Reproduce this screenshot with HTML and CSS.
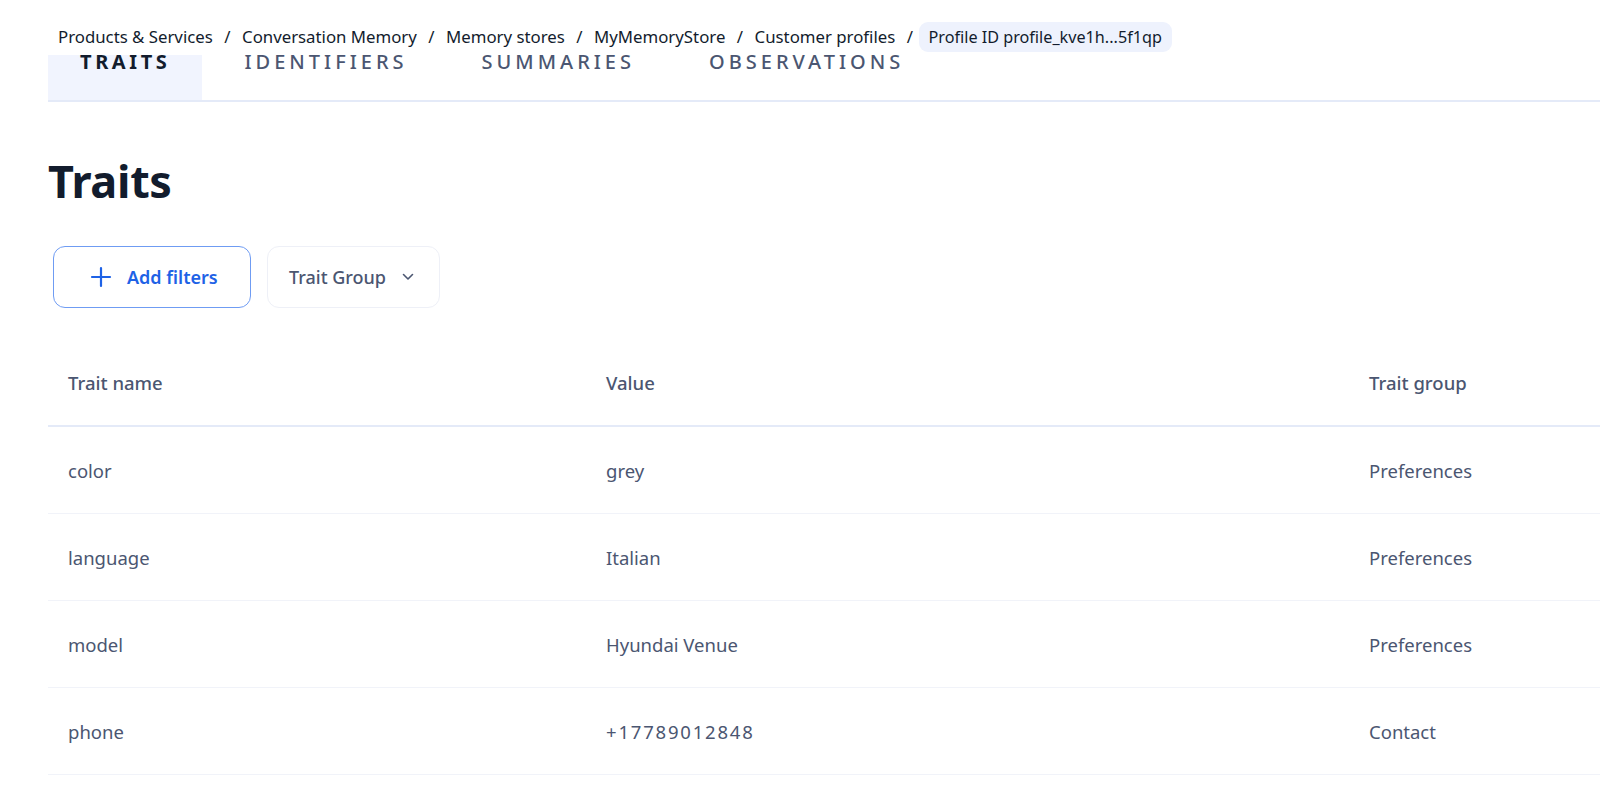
FILE: index.html
```html
<!DOCTYPE html>
<html lang="en">
<head>
<meta charset="utf-8">
<title>Traits</title>
<link rel="stylesheet" href="styles.css">
</head>
<body>
<div class="page">
  <nav class="crumbs">
    <span class="crumb">Products &amp; Services</span>
    <span class="sep">/</span>
    <span class="crumb">Conversation Memory</span>
    <span class="sep">/</span>
    <span class="crumb">Memory stores</span>
    <span class="sep">/</span>
    <span class="crumb">MyMemoryStore</span>
    <span class="sep">/</span>
    <span class="crumb">Customer profiles</span>
    <span class="sep">/</span>
    <span class="crumb current">Profile ID profile_kve1h...5f1qp</span>
  </nav>

  <div class="tabs">
    <div class="tab active"><span>TRAITS</span></div>
    <div class="tab"><span>IDENTIFIERS</span></div>
    <div class="tab"><span>SUMMARIES</span></div>
    <div class="tab"><span>OBSERVATIONS</span></div>
  </div>

  <h1 class="title">Traits</h1>

  <div class="filters">
    <button class="btn btn-add">
      <svg class="plus" width="22" height="22" viewBox="0 0 22 22" aria-hidden="true">
        <path d="M11 2v18M2 11h18" stroke="currentColor" stroke-width="2.2" stroke-linecap="round" fill="none"/>
      </svg>
      <span>Add filters</span>
    </button>
    <button class="btn btn-group">
      <span>Trait Group</span>
      <svg class="chev" width="12" height="8" viewBox="0 0 12 8" aria-hidden="true">
        <path d="M1.5 1.5L6 6l4.5-4.5" stroke="currentColor" stroke-width="1.6" stroke-linecap="round" stroke-linejoin="round" fill="none"/>
      </svg>
    </button>
  </div>

  <div class="table">
    <div class="row head">
      <div class="cell c1">Trait name</div>
      <div class="cell c2">Value</div>
      <div class="cell c3">Trait group</div>
    </div>
    <div class="row">
      <div class="cell c1">color</div>
      <div class="cell c2">grey</div>
      <div class="cell c3">Preferences</div>
    </div>
    <div class="row">
      <div class="cell c1">language</div>
      <div class="cell c2">Italian</div>
      <div class="cell c3">Preferences</div>
    </div>
    <div class="row">
      <div class="cell c1">model</div>
      <div class="cell c2">Hyundai Venue</div>
      <div class="cell c3">Preferences</div>
    </div>
    <div class="row">
      <div class="cell c1">phone</div>
      <div class="cell c2 num">+17789012848</div>
      <div class="cell c3">Contact</div>
    </div>
  </div>
</div>
</body>
</html>
```

FILE: styles.css
```css
* { box-sizing: border-box; }

html, body {
  margin: 0;
  padding: 0;
  background: #ffffff;
  font-family: "Noto Sans", "Open Sans", sans-serif;
  color: #121c2d;
  overflow: hidden;
}

.page {
  padding-left: 48px;
  width: 1600px;
}

/* Breadcrumbs */
.crumbs {
  display: flex;
  align-items: center;
  height: 55px;
  padding: 19px 0 0 10px;
  gap: 11.5px;
  font-size: 16.8px;
  line-height: 20px;
  color: #121c2d;
  white-space: nowrap;
}

.sep {
  color: #121c2d;
}

.crumb.current {
  background: #eef2fd;
  border-radius: 9px;
  padding: 5px 10px;
  margin-left: -6px;
  font-size: 16.2px;
}

/* Tabs */
.tabs {
  display: flex;
  gap: 10px;
  height: 47px;
  border-bottom: 2px solid #e4eaf8;
}

.tab {
  padding: 0 32px;
  height: 45px;
  font-size: 20px;
  line-height: 14px;
  letter-spacing: 4px;
  color: #4b5671;
  font-weight: 500;
}

.tab span {
  display: block;
}

.tab.active {
  background: #f1f4fe;
  color: #121c2d;
  font-weight: 700;
  letter-spacing: 3.6px;
}

/* Title */
.title {
  margin: 0;
  padding-top: 51px;
  font-size: 45px;
  line-height: 56px;
  font-weight: 700;
  color: #121c2d;
  letter-spacing: -0.3px;
}

/* Filters */
.filters {
  display: flex;
  gap: 16px;
  margin-top: 37px;
  padding-left: 5px;
}

.btn {
  display: flex;
  align-items: center;
  height: 62px;
  border-radius: 12px;
  background: #ffffff;
  font-family: inherit;
  font-size: 18px;
  cursor: pointer;
}

.btn-add {
  width: 198px;
  padding: 0 0 0 36px;
  gap: 15px;
  border: 1px solid #6f9cf3;
  color: #1e62e6;
  font-weight: 600;
}

.btn-add .plus {
  flex: none;
}

.btn-group {
  width: 173px;
  padding: 0 0 0 21px;
  gap: 16px;
  border: 1px solid #eef0f7;
  color: #4b5671;
  font-weight: 500;
}

.btn-group .chev {
  flex: none;
  color: #4b5671;
}

/* Table */
.table {
  margin-top: 31px;
  width: 1552px;
}

.row {
  display: grid;
  grid-template-columns: 538px 763px 1fr;
  height: 87px;
  align-items: center;
  border-bottom: 1px solid #f1f3f9;
  font-size: 18.5px;
  color: #4b5671;
}

.row.head {
  border-bottom: 2px solid #e4eaf8;
  font-weight: 500;
  font-size: 18.5px;
  height: 88px;
}

.cell {
  padding-left: 20px;
  white-space: nowrap;
}

.cell.num {
  letter-spacing: 1.8px;
}
```
